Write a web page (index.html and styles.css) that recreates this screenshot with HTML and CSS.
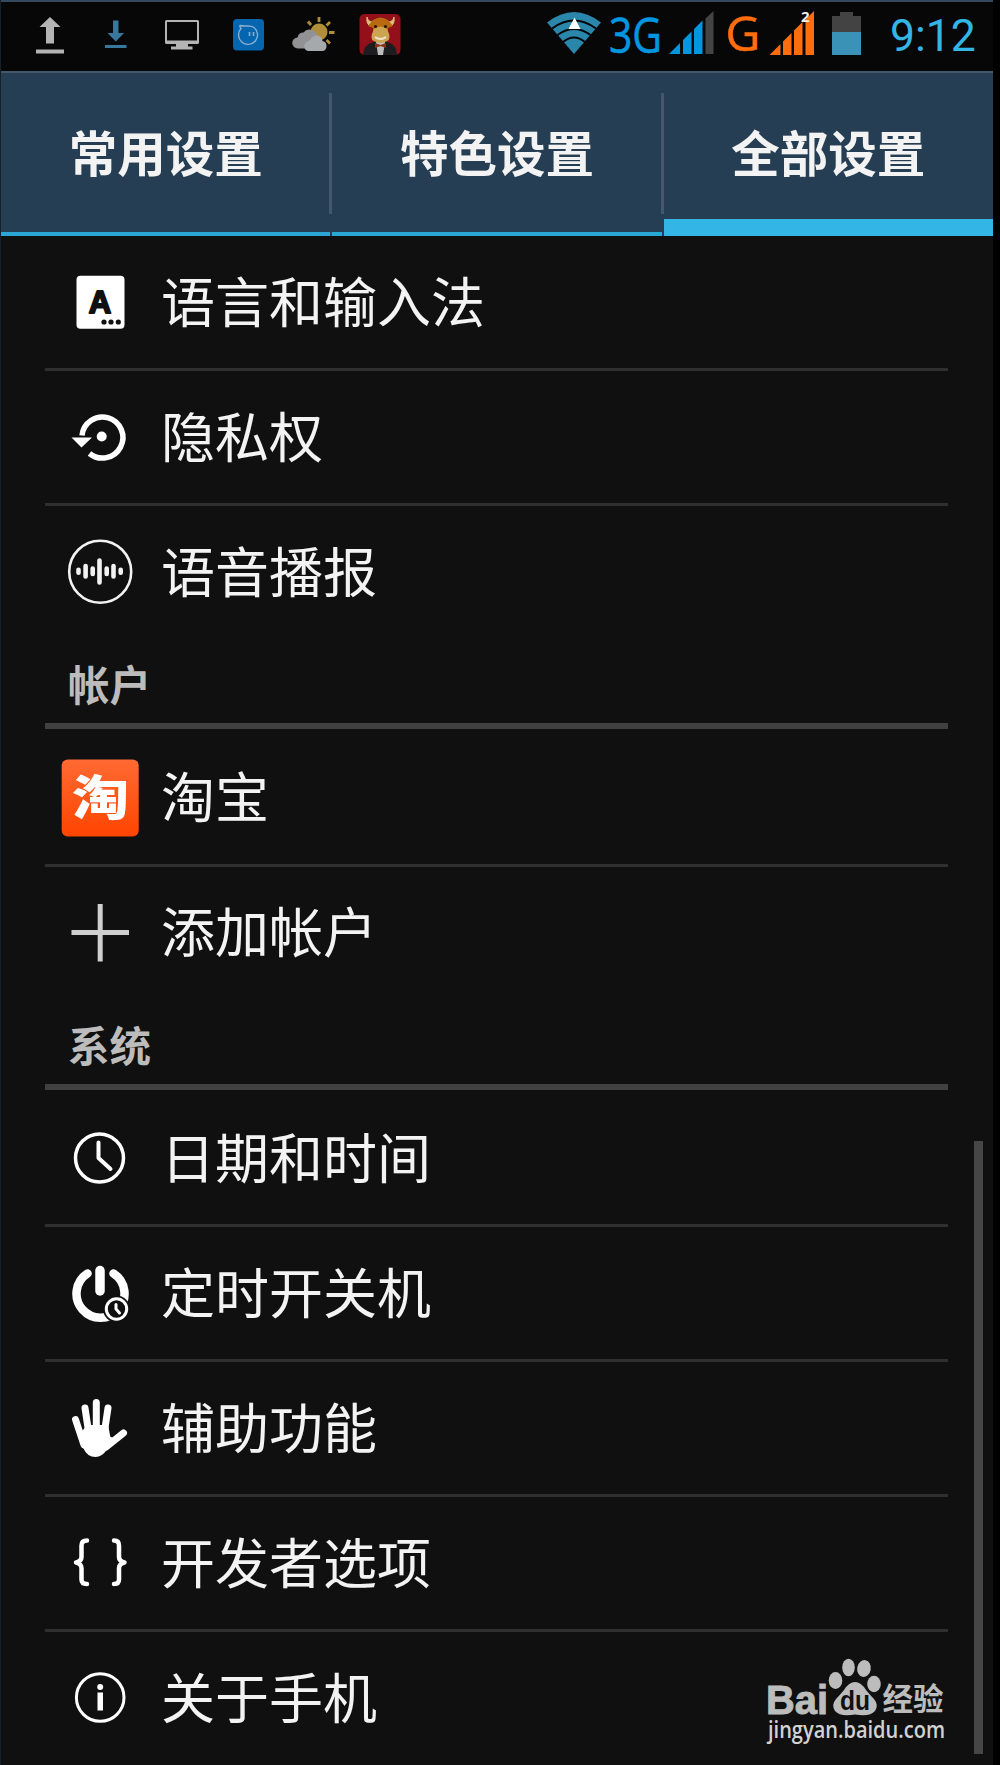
FILE: index.html
```html
<!DOCTYPE html>
<html lang="zh-CN">
<head>
    <meta charset="UTF-8">
    <meta name="viewport" content="width=device-width, initial-scale=1.0">
    <title>设置</title>
    <link rel="stylesheet" href="styles.css">
</head>
<body>

<div class="screen">
    <!-- Status bar -->
    <div class="status-bar">
        <div class="notifications">
            <svg viewBox="0 0 66 66" fill="#b4b4b4">
                <path d="M33 15l10.500 10H37v16.500h-8V25h-6.500z"/>
                <rect x="19" y="47.500" width="28" height="4"/>
            </svg>
            <svg viewBox="0 0 66 66" fill="#37789c">
                <path d="M30 18.500h5.500V31h5.500l-8.200 8.500L24.500 31H30z"/>
                <rect x="22" y="43" width="21.500" height="3"/>
            </svg>
            <svg viewBox="0 0 66 66" fill="#b4b4b4">
                <path fill-rule="evenodd" d="M17.500 18h31a1.500 1.500 0 0 1 1.500 1.500v21a1.500 1.500 0 0 1-1.500 1.500H39v2.500h4.500v3H22v-3h5V42h-9.500a1.500 1.500 0 0 1-1.500-1.500v-21a1.500 1.500 0 0 1 1.500-1.500zM18 20v18.500h30V20z"/>
            </svg>
            <svg viewBox="0 0 66 66">
                <rect x="18" y="17" width="31" height="31.500" rx="4" fill="#0665af"/>
                <path d="M26 26.500A9.500 9.500 0 1 0 39 25.500C35 22.500 31 25 25 23.500q-.5 1.500 1 3z" fill="none" stroke="#8ab0cf" stroke-width="1.400"/>
                <path d="M34.500 30v4M38.500 30v4" stroke="#8ab0cf" stroke-width="1.600"/>
            </svg>
            <svg viewBox="0 0 66 66">
                <circle cx="38" cy="30" r="8.500" fill="#b08e37"/>
                <path d="M38 15v5M27 19.500l3 3.500M49 20l-3.500 3.500M48 30.500h5.500M45.500 38l3.500 3.500" stroke="#b08e37" stroke-width="2.800"/>
                <path d="M17 46.500a5.500 5.500 0 0 1-.5-11q1-5 6-5 3-4 8-2.500 6 1 6 7l-9 11.500z" fill="#929294"/>
                <path d="M27 49a5 5 0 0 1-.5-9.500q1.500-1.500 3-1.500 1.500-4.500 6-4.500 5.500 0 6 5.500 4.500 1 4 6-1 4-4 4z" fill="#a5a9ab"/>
            </svg>
            <svg viewBox="0 0 66 66">
                <rect x="12.500" y="12" width="41" height="41" rx="5" fill="#93101b"/>
                <path d="M16 53q0-10 10-13h15q9 3 9 13z" fill="#1d1d1f"/>
                <path d="M29 40h9l-2 13h-5z" fill="#bdbdbd"/>
                <path d="M24 24q-5-1-4-9 1 5 6 5zM43 24q5-1 4-9-1 5-6 5z" fill="#d8bf7c" stroke="#d8bf7c"/>
                <path d="M26 18q7.500-5 15 0l5 6-5 2v7H26v-7l-5-2z" fill="#b96910"/>
                <path d="M27 27q6.500-5 13 0 5 10 0 12-6.500 4-13 0-5-2 0-12z" fill="#cda552"/>
                <path d="M28 35q5.500 4 11 0" fill="none" stroke="#eee3cc" stroke-width="2"/>
                <circle cx="28.500" cy="24.500" r="1.600" fill="#2a1608"/>
                <circle cx="38.500" cy="24.500" r="1.600" fill="#2a1608"/>
                <path d="M28 41l5.500 2 5.500-2v5l-5.500-2-5.500 2z" fill="#8c2e18"/>
            </svg>
        </div>

        <div class="indicators">
            <svg class="wifi" viewBox="0 0 54 42">
                <path d="M27 42L0 10.500Q27-10.500 54 10.500z" fill="#2a86ab"/>
                <path d="M5 16.500q22-16 44 0M10.500 23q16.500-12 33 0M16 30q11-9 22 0" fill="none" stroke="#060606" stroke-width="2"/>
                <path d="M27.500 5.500L33.500 17h-12z" fill="#fff"/>
            </svg>
            <svg class="sim1" viewBox="0 0 106 66">
                <text x="1" y="50.500" class="net net-3g" textLength="53" lengthAdjust="spacingAndGlyphs">3G</text>
                <g fill="#0097e0">
                    <path d="M61 52l11-11v11zM75 38l8.500-8.500V52H75zM86 27l8.500-8.500V52H86z"/>
                    <path d="M97.500 16.500L105.500 9v43h-8z" fill="#444"/>
                </g>
            </svg>
            <svg class="sim2" viewBox="0 0 88 66">
                <text x="-1.500" y="48.500" class="net net-g" textLength="35" lengthAdjust="spacingAndGlyphs">G</text>
                <path d="M42.500 53l11-11v11zM56 39.500l8.500-8.500v22H56zM67 28.500l8.500-8.500v33H67zM78.500 17.500L87 9v44h-8.500z" fill="#ff6d0d"/>
                <text x="74" y="19.500" class="slot">2</text>
            </svg>
            <svg class="battery" viewBox="0 0 29 43">
                <path d="M0 4h8V0h13v4h8v17H0z" fill="#434343"/>
                <rect y="20" width="29" height="23" fill="#3a92b6"/>
            </svg>
            <span class="clock">9:12</span>
        </div>
    </div>

    <!-- Tabs -->
    <div class="tabs">
        <div class="tab">常用设置</div>
        <div class="tab">特色设置</div>
        <div class="tab active">全部设置</div>
    </div>

    <!-- Settings list -->
    <div class="list">
        <div class="row">
            <svg class="icon" viewBox="0 0 80 80">
                <rect x="16.500" y="13.700" width="48" height="53" rx="4" fill="#fff"/>
                <text x="40" y="51" class="letter-a">A</text>
                <g fill="#101010">
                    <circle cx="44" cy="60" r="2.600"/>
                    <circle cx="51" cy="60" r="2.600"/>
                    <circle cx="58.300" cy="60" r="2.600"/>
                </g>
            </svg>
            <span>语言和输入法</span>
        </div>
        <div class="row">
            <svg class="icon" viewBox="0 0 80 80">
                <path d="M22 38.500A20.500 20.500 0 1 1 29.500 56.500" fill="none" stroke="#fff" stroke-width="5.500"/>
                <path d="M11.500 40.500h20.500l-10.500 10z" fill="#fff"/>
                <circle cx="41.700" cy="39.500" r="5" fill="#fff"/>
            </svg>
            <span>隐私权</span>
        </div>
        <div class="row last">
            <svg class="icon" viewBox="0 0 80 80" fill="none" stroke="#f2f2f2">
                <circle cx="40.200" cy="39.700" r="31" stroke-width="2.600"/>
                <path d="M18.500 37.800v3M25.600 34v10.500M32.700 36.500v5.500M39.500 28.500v22M46.700 36.500v5.500M53.500 34v10.500M60.700 37.800v3" stroke-width="4.600" stroke-linecap="round"/>
            </svg>
            <span>语音播报</span>
        </div>

        <div class="category">帐户</div>
        <div class="row">
            <svg class="icon" viewBox="0 0 80 80">
                <defs>
                    <linearGradient id="orange" x1="0" y1="0" x2="0" y2="1">
                        <stop offset="0" stop-color="#ff6a33"/>
                        <stop offset="1" stop-color="#ff4400"/>
                    </linearGradient>
                </defs>
                <rect x="1.700" y="1.500" width="77" height="77" rx="6" fill="url(#orange)"/>
                <text x="12" y="56.500" class="tao" textLength="57" lengthAdjust="spacingAndGlyphs">淘</text>
            </svg>
            <span>淘宝</span>
        </div>
        <div class="row last">
            <svg class="icon" viewBox="0 0 80 80">
                <path d="M11.500 39.500h57.500M40.200 11v57.500" stroke="#cfcfcf" stroke-width="5"/>
            </svg>
            <span>添加帐户</span>
        </div>

        <div class="category">系统</div>
        <div class="row">
            <svg class="icon" viewBox="0 0 80 80" fill="none" stroke="#fff">
                <circle cx="39.500" cy="40" r="24" stroke-width="3.500"/>
                <path d="M38.500 24.500V40l12 11" stroke-width="4" stroke-linecap="round" stroke-linejoin="round"/>
            </svg>
            <span>日期和时间</span>
        </div>
        <div class="row">
            <svg class="icon" viewBox="0 0 80 80" fill="none" stroke="#fff">
                <path d="M27.500 20.500A24 24 0 1 0 53.500 20.500" stroke-width="8.500" stroke-linecap="round"/>
                <path d="M40 17.500v20.500" stroke-width="9.500" stroke-linecap="round"/>
                <circle cx="56.500" cy="56" r="13.500" fill="#101010" stroke="none"/>
                <circle cx="56.500" cy="56" r="10.200" stroke-width="3"/>
                <path d="M56 51.500V56l3.500 4" stroke-width="3" stroke-linecap="round"/>
            </svg>
            <span>定时开关机</span>
        </div>
        <div class="row">
            <svg class="icon" viewBox="0 0 80 80" stroke="#fff" stroke-width="7" stroke-linecap="round" stroke-linejoin="round">
                <path d="M15.500 31.500L24 57M25 20l4.500 30M36.300 14.500V50M48 20l-4.500 30M63.500 45L46 59" fill="none"/>
                <path d="M23 45l5-6h18.500l2 11 4.500 2-8 9q-4 6-9.500 6-7 0-10-7z" stroke-width="4" fill="#fff"/>
            </svg>
            <span>辅助功能</span>
        </div>
        <div class="row">
            <svg class="icon" viewBox="0 0 80 80" fill="none" stroke="#fff" stroke-width="4.500" stroke-linecap="round" stroke-linejoin="round">
                <path d="M27 17.500q-5.500 0-5.500 5V34q0 4-5.500 5.500 5.500 1.500 5.500 5.500v11.500q0 4.500 5.500 4.500"/>
                <path d="M54 17.500q5 0 5 5V34q0 4 5.500 5.500-5.500 1.500-5.500 5.500v11.500q0 4.500-5 4.500"/>
            </svg>
            <span>开发者选项</span>
        </div>
        <div class="row last">
            <svg class="icon" viewBox="0 0 80 80">
                <circle cx="40.200" cy="39.500" r="23.800" fill="none" stroke="#fff" stroke-width="3"/>
                <rect x="37.500" y="34.500" width="5.500" height="18" fill="#fff"/>
                <circle cx="40.200" cy="29" r="3" fill="#fff"/>
            </svg>
            <span>关于手机</span>
        </div>
    </div>

    <div class="scrollbar"></div>

    <!-- Watermark -->
    <svg class="watermark" viewBox="0 0 190 100" fill="#bcbcbc">
        <text x="6" y="63.500" class="wm-bai" textLength="62" lengthAdjust="spacingAndGlyphs">Bai</text>
        <ellipse cx="75.500" cy="30.500" rx="6.800" ry="8.500"/>
        <ellipse cx="88.500" cy="17.500" rx="6.300" ry="8.800"/>
        <ellipse cx="104" cy="18.500" rx="6.800" ry="8.500" transform="rotate(10 104 18.500)"/>
        <ellipse cx="114" cy="34" rx="6.800" ry="8.300"/>
        <path d="M95 32q6 0 11 8 5 6 8 9 5 6 1 12-5 6-20 3.500-15 2.500-20-3.500-4-6 1-12 3-3 8-9 5-8 11-8z"/>
        <text x="80" y="59.500" class="wm-du" textLength="30" lengthAdjust="spacingAndGlyphs">du</text>
        <text x="122.500" y="60" class="wm-cn" textLength="61" lengthAdjust="spacingAndGlyphs">经验</text>
        <text x="8" y="87.500" class="wm-url" textLength="177" lengthAdjust="spacingAndGlyphs">jingyan.baidu.com</text>
    </svg>
</div>

</body>
</html>
```

FILE: styles.css
```css
* {
    box-sizing: border-box;
}

body {
    margin: 0;
    background-color: #000;
    font-family: "Noto Sans CJK SC", sans-serif;
    color: #f3f3f3;
}

.screen {
    position: relative;
    width: 993px;
    height: 1765px;
    overflow: hidden;
    background-color: #101010;
    border-left: 1px solid #14202a;
}

svg {
    display: block;
    flex: none;
    overflow: visible;
}

/* status bar */
.status-bar {
    display: flex;
    justify-content: space-between;
    height: 71px;
    padding: 0 18px 0 16px;
    background-color: #070707;
    border-top: 2px solid #34495b;
}

.notifications {
    display: flex;
}

.notifications svg {
    width: 66px;
    height: 66px;
}

.indicators {
    display: flex;
    align-items: flex-start;
}

.wifi {
    width: 54px;
    height: 42px;
    margin: 10px 7px 0 0;
}

.sim1 {
    width: 106px;
    height: 66px;
    margin-right: 13px;
}

.sim2 {
    width: 88px;
    height: 66px;
    margin-right: 17px;
}

.battery {
    width: 29px;
    height: 43px;
    margin: 10px 29px 0 0;
}

.net {
    font-family: "Open Sans", sans-serif;
    font-size: 50px;
}

.net-3g {
    fill: #0097e0;
    stroke: #0097e0;
    stroke-width: 0.600px;
}

.net-g {
    font-size: 48px;
    fill: #ff6d0d;
    stroke: #ff6d0d;
    stroke-width: 0.600px;
}

.slot {
    font-family: "Open Sans", sans-serif;
    font-size: 15px;
    font-weight: bold;
    fill: #eee;
}

.clock {
    width: 85px;
    font-family: Roboto, sans-serif;
    font-size: 44.500px;
    line-height: 69px;
    color: #33b5e5;
}

/* tabs */
.tabs {
    display: flex;
    gap: 2px;
    height: 165px;
    background-color: #253e53;
    border-top: 2px solid #45586a;
}

.tab {
    position: relative;
    flex: 1;
    border-bottom: 4px solid #2ba7d6;
    font-size: 48.500px;
    font-weight: bold;
    line-height: 157px;
    text-align: center;
}

.tab + .tab::before {
    content: "";
    position: absolute;
    left: -3px;
    top: 20px;
    width: 3px;
    height: 121px;
    background-color: #45586b;
}

.tab.active {
    border-bottom: 17px solid #33b5e5;
}

/* list */
.list {
    width: 903px;
    margin-left: 44px;
}

.row {
    display: flex;
    align-items: center;
    height: 135px;
    padding-left: 15px;
    border-bottom: 3px solid #2f2f2f;
    font-size: 54px;
    line-height: 80px;
}

.row span {
    padding-bottom: 5px;
}

.row.last {
    border-color: transparent;
}

.icon {
    width: 80px;
    height: 80px;
    margin-right: 21px;
}

.category {
    height: 88px;
    margin-bottom: 2.500px;
    padding-left: 23px;
    border-bottom: 6px solid #404040;
    font-size: 41.500px;
    font-weight: bold;
    line-height: 84px;
    color: #bcbcbc;
}

.letter-a {
    font-family: "Liberation Sans", sans-serif;
    font-size: 31px;
    font-weight: bold;
    text-anchor: middle;
    fill: #101010;
    stroke: #101010;
    stroke-width: 2px;
    stroke-linejoin: round;
}

.tao {
    font-size: 48px;
    font-weight: 900;
    fill: #fff;
}

/* overlays */
.scrollbar {
    position: absolute;
    left: 973px;
    top: 1141px;
    width: 9px;
    height: 613px;
    background-color: #464646;
}

.watermark {
    position: absolute;
    left: 759px;
    top: 1650px;
    width: 190px;
    height: 100px;
}

.wm-bai {
    font-family: "Liberation Sans", sans-serif;
    font-size: 41px;
    font-weight: bold;
    stroke: #bcbcbc;
    stroke-width: 1px;
}

.wm-du {
    font-family: "Liberation Sans", sans-serif;
    font-size: 28px;
    font-weight: bold;
    fill: #101010;
}

.wm-cn {
    font-size: 31px;
    font-weight: bold;
}

.wm-url {
    font-family: "Open Sans", sans-serif;
    font-size: 23px;
    font-weight: 600;
    fill: #d2d2d2;
}
```
